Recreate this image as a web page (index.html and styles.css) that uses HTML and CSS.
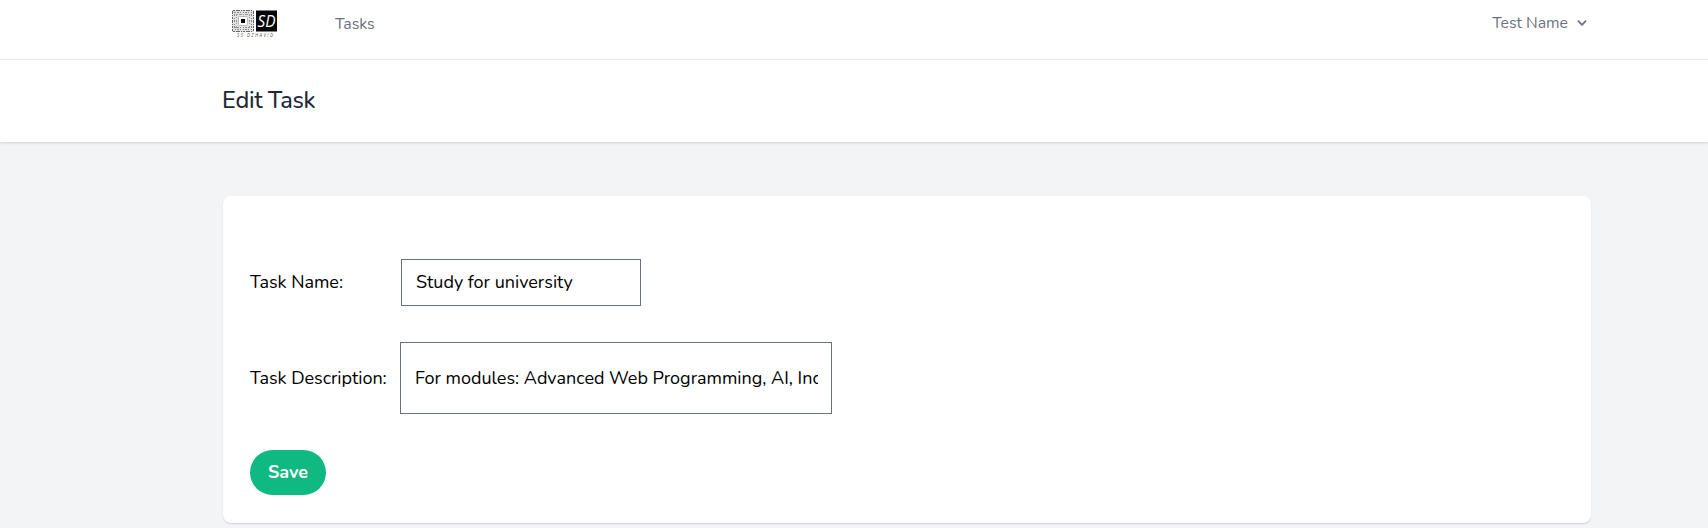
FILE: index.html
```html
<!DOCTYPE html>
<html lang="en">
<head>
<meta charset="utf-8">
<title>Edit Task</title>
<link rel="stylesheet" href="styles.css">
</head>
<body>
<nav class="nav">
  <div class="nav-left">
    <a class="logo" href="#">
      <svg width="46" height="30" viewBox="0 0 46 30">
        <rect width="22" height="22" fill="#e2e2e2"/>
        <g fill="none" stroke="#666" stroke-width="1">
          <path d="M.5 1v20M21.5 1v20" stroke-dasharray="3 1 1 1 2 1"/>
          <path d="M1 .5h20M1 21.5h20" stroke-dasharray="2 1 4 1 1 1"/>
          <path d="M2.5 2v18M19.5 2v18" stroke-dasharray="1 1 2 2" stroke="#888"/>
          <path d="M3 2.500h17M3 19.500h17M3 17.500h17" stroke-dasharray="1 1 2 1 1 2" stroke="#888"/>
          <path d="M4.500 4v14M17.500 4v14" stroke-dasharray="2 1 1 2" stroke="#999"/>
          <path d="M5 4.500h13" stroke-dasharray="1 1 3 1" stroke="#999"/>
          <rect x="6.500" y="6.500" width="9" height="9" rx="1" fill="#fff" stroke="#bbb"/>
        </g>
        <rect x="9" y="9" width="4" height="4" fill="#000"/>
        <rect x="24" y=".5" width="21" height="21" fill="#050505"/>
        <text class="logo-mark" x="25.500" y="16.500" textLength="18" lengthAdjust="spacingAndGlyphs">SD</text>
        <text class="logo-name" x="5" y="27" textLength="36">SS DZHAVID</text>
      </svg>
    </a>
    <a class="nav-link" href="#">Tasks</a>
  </div>
  <div class="user">
    <span class="user-name">Test Name</span>
    <svg width="18" height="18" viewBox="0 0 20 20"><path fill="#6b7280" fill-rule="evenodd" d="M5.293 7.293a1 1 0 011.414 0L10 10.586l3.293-3.293a1 1 0 111.414 1.414l-4 4a1 1 0 01-1.414 0l-4-4a1 1 0 010-1.414z"/></svg>
  </div>
</nav>
<header class="header"><h2 class="title">Edit Task</h2></header>
<main class="main">
  <form class="card">
    <div class="row row-name">
      <label class="label" for="name">Task Name:</label>
      <input class="input input-name" id="name" type="text" value="Study for university">
    </div>
    <div class="row row-desc">
      <label class="label" for="desc">Task Description:</label>
      <input class="input input-desc" id="desc" type="text" value="For modules: Advanced Web Programming, AI, Including">
    </div>
    <button class="save" type="button">Save</button>
  </form>
</main>
</body>
</html>
```
FILE: styles.css
```css
* { box-sizing: border-box; }
body {
  margin: 0;
  height: 528px;
  overflow: hidden;
  background: #f3f4f6;
  color: #000;
  font: 18px/27px Nunito, Lato, sans-serif;
}
.nav {
  display: flex;
  justify-content: space-between;
  height: 60px;
  padding: 0 117px 0 232px;
  background: #fff;
  border-bottom: 1px solid #ebecee;
}
.nav-left { display: flex; }
.logo { display: block; width: 103px; padding-top: 10px; }
.logo svg { display: block; }
.logo-mark { font: italic 16px "Open Sans", sans-serif; fill: #fff; }
.logo-name { font: italic 4.5px "Open Sans", sans-serif; fill: #555; }
.nav-link {
  padding-top: 11px;
  color: #6b7280;
  font-size: 15.8px;
  text-decoration: none;
}
.user { display: flex; gap: 5px; padding-top: 10px; color: #6b7280; font-size: 15.8px; }
.user svg { margin-top: 4px; }
.header {
  position: relative;
  height: 82px;
  padding: 24px 223px 0 222px;
  background: #fff;
  box-shadow: 0 1px 3px rgba(0,0,0,.1), 0 1px 2px rgba(0,0,0,.06);
}
.title {
  margin: 0;
  color: #1f2937;
  font-size: 23.5px;
  line-height: 32px;
  font-weight: 500;
  letter-spacing: -.3px;
}
.main { padding: 54px 117px 0 223px; }
.card {
  height: 327px;
  padding: 63px 27px 0;
  background: #fff;
  border-radius: 8px;
  box-shadow: 0 1px 2px rgba(0,0,0,.08), 0 1px 0 rgba(0,0,0,.08);
}
.row { display: flex; align-items: center; }
.row-name { height: 47px; margin-bottom: 36px; }
.row-desc { height: 72px; margin-bottom: 36px; }
.label { width: 150px; letter-spacing: -.03px; }
.input {
  border: 1px solid #6b7280;
  padding: 0 14px;
  background: #fff;
  color: #000;
  font: inherit;
}
.input-name { width: 240px; height: 47px; margin-left: 1px; padding-bottom: 2px; }
.input-desc { width: 432px; height: 72px; padding-right: 13px; }
.save {
  display: block;
  width: 76px;
  height: 45px;
  padding: 0;
  border: 0;
  border-radius: 23px;
  background: #10b981;
  color: #fff;
  font: bold 18px/27px Nunito, Lato, sans-serif;
}
```
